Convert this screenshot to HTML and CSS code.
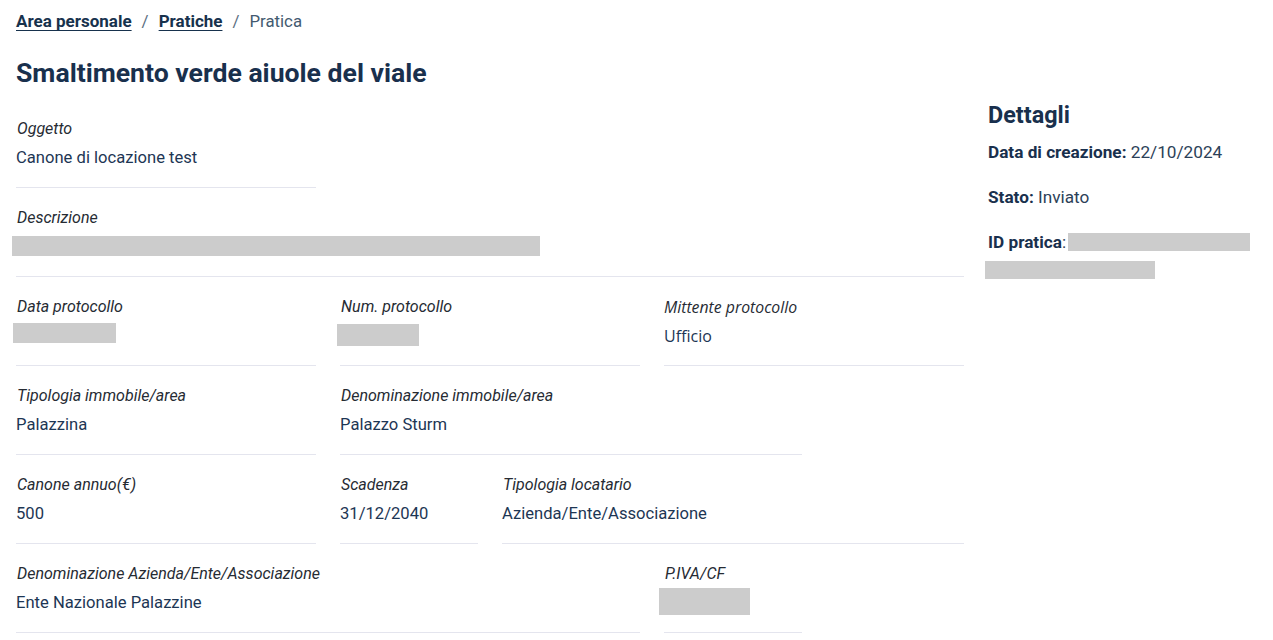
FILE: index.html
```html
<!DOCTYPE html>
<html lang="it">
<head>
<meta charset="utf-8">
<title>Pratica</title>
<link rel="stylesheet" href="styles.css">
</head>
<body>
<nav class="breadcrumb">
  <a href="#" class="crumb-link">Area personale</a>
  <span class="sep">/</span>
  <a href="#" class="crumb-link">Pratiche</a>
  <span class="sep">/</span>
  <span class="crumb-current">Pratica</span>
</nav>

<h1 class="page-title">Smaltimento verde aiuole del viale</h1>

<div class="layout">
  <main class="fields">
    <div class="field span-4">
      <div class="label">Oggetto</div>
      <div class="value">Canone di locazione test</div>
    </div>
    <div class="break"></div>
    <div class="field span-12">
      <div class="label">Descrizione</div>
      <div class="value"><span class="redact r-desc"></span></div>
    </div>

    <div class="field span-4">
      <div class="label">Data protocollo</div>
      <div class="value"><span class="redact r-data"></span></div>
    </div>
    <div class="field span-4">
      <div class="label">Num. protocollo</div>
      <div class="value"><span class="redact r-num"></span></div>
    </div>
    <div class="field span-4 alt-font">
      <div class="label">Mittente protocollo</div>
      <div class="value">Ufficio</div>
    </div>

    <div class="field span-4">
      <div class="label">Tipologia immobile/area</div>
      <div class="value">Palazzina</div>
    </div>
    <div class="field span-6">
      <div class="label">Denominazione immobile/area</div>
      <div class="value">Palazzo Sturm</div>
    </div>
    <div class="break"></div>

    <div class="field span-4">
      <div class="label">Canone annuo(€)</div>
      <div class="value">500</div>
    </div>
    <div class="field span-2">
      <div class="label">Scadenza</div>
      <div class="value">31/12/2040</div>
    </div>
    <div class="field span-6">
      <div class="label">Tipologia locatario</div>
      <div class="value">Azienda/Ente/Associazione</div>
    </div>

    <div class="field span-8">
      <div class="label">Denominazione Azienda/Ente/Associazione</div>
      <div class="value">Ente Nazionale Palazzine</div>
    </div>
    <div class="field span-2">
      <div class="label">P.IVA/CF</div>
      <div class="value"><span class="redact r-piva"></span></div>
    </div>
  </main>

  <aside class="details">
    <h2 class="details-title">Dettagli</h2>
    <p class="detail"><strong>Data di creazione:</strong> 22/10/2024</p>
    <p class="detail"><strong>Stato:</strong> Inviato</p>
    <p class="detail"><strong>ID pratica</strong>: <span class="redact r-id1"></span><br><span class="redact r-id2"></span></p>
  </aside>
</div>
</body>
</html>
```

FILE: styles.css
```css
html, body {
  margin: 0;
  padding: 0;
  background: #ffffff;
}

body {
  padding: 0 16px;
  font-family: Roboto, "Liberation Sans", sans-serif;
  color: #17324d;
  font-size: 16px;
}

.breadcrumb {
  height: 42px;
  display: flex;
  align-items: center;
  font-size: 17px;
  line-height: 24px;
}

.crumb-link {
  color: #17324d;
  font-weight: 700;
  text-decoration: underline;
  text-underline-offset: 3px;
}

.sep {
  color: #5c6f82;
  margin: 0 10px;
}

.crumb-current {
  color: #435a70;
  font-size: 16.8px;
}

.page-title {
  margin: 0;
  padding-top: 14px;
  font-size: 26.6px;
  line-height: 34px;
  font-weight: 700;
  color: #19304d;
  height: 57px;
  box-sizing: border-box;
}

.layout {
  display: flex;
  gap: 24px;
  align-items: flex-start;
}

.fields {
  width: 948px;
  flex: none;
  display: grid;
  grid-template-columns: repeat(12, 57px);
  column-gap: 24px;
}

.break {
  grid-column: 1 / -1;
  height: 0;
}

.span-2 { grid-column: span 2; }
.span-4 { grid-column: span 4; }
.span-6 { grid-column: span 6; }
.span-8 { grid-column: span 8; }
.span-12 { grid-column: span 12; }

.field {
  padding: 18px 0;
  border-bottom: 1px solid #e4e5ee;
}

.label {
  font-style: italic;
  font-size: 16px;
  line-height: 24px;
  color: #262b33;
  margin-bottom: 4px;
  padding-left: 1px;
  padding-top: 1px;
  margin-top: -1px;
}

.value {
  font-size: 16.6px;
  line-height: 24px;
  color: #1d3654;
  height: 24px;
  padding-top: 1px;
  margin-bottom: -1px;
}

.alt-font .label,
.alt-font .value {
  font-family: "Open Sans", sans-serif;
  padding-left: 0;
}

.alt-font .label {
  font-size: 15.8px;
  padding-top: 0;
  margin-top: 0;
}

.alt-font .value {
  font-size: 16px;
}

.redact {
  display: inline-block;
  background: #cccccc;
  vertical-align: top;
}

.r-desc { width: 528px; height: 20px; margin: 1px 0 0 -4px; }
.r-data { width: 103px; height: 20px; margin: -1px 0 0 -3px; }
.r-num  { width: 82px;  height: 22px; margin: 0 0 0 -3px; }
.r-piva { width: 91px;  height: 27px; margin: -3px 0 0 -5px; }

.details {
  width: 269px;
  flex: none;
}

.details-title {
  margin: 0;
  padding-top: 1px;
  font-size: 23.4px;
  line-height: 30px;
  font-weight: 700;
  color: #19304d;
}

.detail {
  margin: 8px 0 17px;
  font-size: 17.2px;
  line-height: 28px;
  color: #2c4158;
}

.detail + .detail {
  margin-top: 0;
}

.detail strong {
  color: #19304d;
}

.r-id1 { width: 182px; height: 18px; margin: 5px 0 0 -2px; }
.r-id2 { width: 170px; height: 18px; margin: 5px 0 0 -3px; }
```
